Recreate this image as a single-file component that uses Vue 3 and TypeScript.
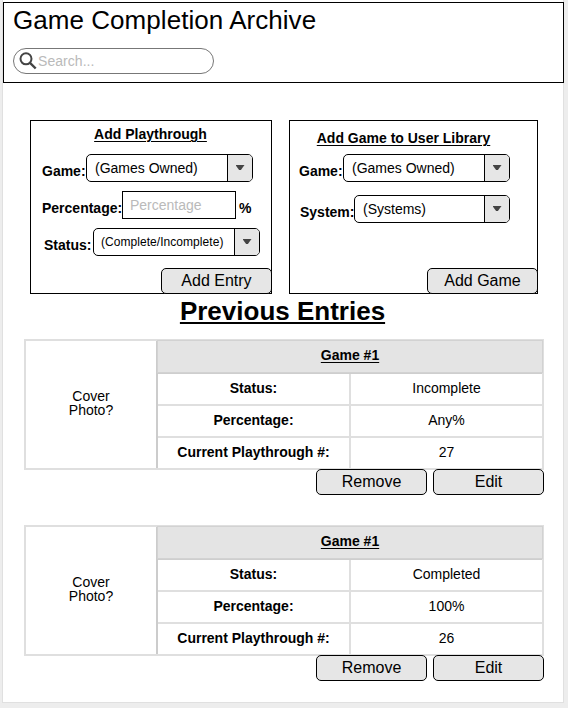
<script setup lang="ts">
interface Entry {
  title: string
  status: string
  percentage: string
  playthrough: number
}

const entries: Entry[] = [
  { title: 'Game #1', status: 'Incomplete', percentage: 'Any%', playthrough: 27 },
  { title: 'Game #1', status: 'Completed', percentage: '100%', playthrough: 26 },
]
</script>

<template>
  <main class="sheet">
    <header class="banner">
      <h1>Game Completion Archive</h1>
      <div class="search">
        <svg class="lens" viewBox="0 0 18 18" width="18" height="18">
          <circle cx="7" cy="6.8" r="5.5" fill="none" stroke="#444" stroke-width="2" />
          <path d="M11 10.8 L16.7 16.5" fill="none" stroke="#444" stroke-width="2.4" />
        </svg>
        <input type="text" placeholder="Search..." />
      </div>
    </header>

    <div class="panels">
      <section class="panel playthrough">
        <h2>Add Playthrough</h2>
        <div class="row game">
          <span class="label">Game:</span>
          <div class="select"><span>(Games Owned)</span><i><b></b></i></div>
        </div>
        <div class="row percent">
          <span class="label">Percentage:</span>
          <input class="field" type="text" placeholder="Percentage" />
          <span class="label unit">%</span>
        </div>
        <div class="row status">
          <span class="label">Status:</span>
          <div class="select small"><span>(Complete/Incomplete)</span><i><b></b></i></div>
        </div>
        <button>Add Entry</button>
      </section>

      <section class="panel library">
        <h2>Add Game to User Library</h2>
        <div class="row game">
          <span class="label">Game:</span>
          <div class="select"><span>(Games Owned)</span><i><b></b></i></div>
        </div>
        <div class="row system">
          <span class="label">System:</span>
          <div class="select"><span>(Systems)</span><i><b></b></i></div>
        </div>
        <button>Add Game</button>
      </section>
    </div>

    <h2 class="heading">Previous Entries</h2>

    <article v-for="(entry, index) in entries" :key="index" class="entry">
      <div class="grid">
        <div class="cover"><span>Cover</span><span>Photo?</span></div>
        <div class="title"><span>{{ entry.title }}</span></div>
        <div class="key">Status:</div>
        <div class="value">{{ entry.status }}</div>
        <div class="key">Percentage:</div>
        <div class="value">{{ entry.percentage }}</div>
        <div class="key">Current Playthrough #:</div>
        <div class="value">{{ entry.playthrough }}</div>
      </div>
      <div class="actions">
        <button>Remove</button>
        <button>Edit</button>
      </div>
    </article>
  </main>
</template>

<style>
body {
  background: #ededed;
}
</style>

<style scoped>
.sheet,
.sheet * {
  box-sizing: border-box;
}
.sheet {
  width: 562px;
  height: 703px;
  margin-left: 2px;
  padding-top: 2px;
  background: #fff;
  border: solid #e0e0e0;
  border-width: 0 1px 1px;
  font-family: 'Liberation Sans', Arial, sans-serif;
  font-size: 14px;
  line-height: 16px;
  color: #000;
  display: flow-root;
}
h1,
h2 {
  margin: 0;
}
.banner {
  width: 561px;
  height: 81px;
  border: 1px solid #000;
  padding: 2px 0 0 9px;
}
h1 {
  font-size: 26px;
  font-weight: 400;
  line-height: 30px;
  letter-spacing: 0.05px;
}
.search {
  display: flex;
  align-items: center;
  width: 201px;
  height: 26px;
  margin-top: 13px;
  padding-left: 5px;
  border: 1px solid #777;
  border-radius: 13px;
}
.lens {
  flex: none;
}
input {
  font: inherit;
  min-width: 0;
  border: 0;
  padding: 0;
  outline: 0;
  background: none;
}
.search input {
  flex: 1;
  margin-left: 1px;
  letter-spacing: 0.05px;
}
input::placeholder {
  color: #bababa;
  opacity: 1;
}
.panels {
  display: flex;
  gap: 17px;
  margin: 37px 0 0 27px;
}
.panel {
  display: flex;
  flex-direction: column;
  height: 174px;
  border: 1px solid #000;
}
.panel h2 {
  font-size: 14px;
  line-height: 16px;
  text-align: center;
  text-decoration: underline;
  text-decoration-thickness: 1px;
  text-underline-offset: 2px;
}
.playthrough {
  width: 242px;
}
.library {
  width: 249px;
}
.playthrough h2 {
  margin: 5px 1px 0 0;
}
.library h2 {
  margin: 9px 20px 0 0;
}
.row {
  display: flex;
  height: 28px;
}
.label {
  font-weight: 700;
  padding-top: 9px;
  flex: none;
}
.playthrough .game {
  margin: 12px 0 0 11px;
}
.playthrough .game .label,
.library .game .label {
  width: 44px;
}
.percent {
  margin: 9px 0 0 11px;
}
.percent .label:first-child {
  width: 80px;
}
.percent .unit {
  margin-left: 3px;
}
.status {
  margin: 9px 0 0 13px;
}
.status .label {
  width: 49px;
}
.library .game {
  margin: 8px 0 0 9px;
}
.library .system {
  margin: 13px 0 0 10px;
}
.system .label {
  width: 54px;
}
.select {
  display: flex;
  width: 167px;
  border: 1px solid #000;
  border-radius: 5px;
  overflow: hidden;
}
.select span {
  flex: 1;
  padding: 5px 0 0 8px;
}
.select.small span {
  font-size: 12px;
  padding-left: 7px;
  letter-spacing: 0.05px;
}
.system .select {
  width: 156px;
}
.select i {
  display: flex;
  align-items: center;
  justify-content: center;
  width: 25px;
  border-left: 1px solid #000;
  background: #e6e6e6;
}
.select b {
  width: 9px;
  height: 5px;
  margin-bottom: 1px;
  background: #444;
  clip-path: polygon(0 0, 100% 0, 60% 100%, 40% 100%);
}
.field {
  width: 114px;
  border: 1px solid #000;
  padding-left: 7px;
}
button {
  width: 111px;
  height: 26px;
  padding: 0;
  font: 16px/24px 'Liberation Sans', Arial, sans-serif;
  color: #000;
  background: #e6e6e6;
  border: 1px solid #000;
  border-radius: 5px;
}
.panel button {
  margin: auto -1px -1px auto;
}
.heading {
  margin: 2px 0 0 -1px;
  font-size: 26px;
  line-height: 30px;
  text-align: center;
  text-decoration: underline;
  text-decoration-thickness: 2px;
  text-underline-offset: 2px;
}
.entry {
  width: 520px;
  height: 156px;
  margin: 13px 0 0 21px;
}
.entry + .entry {
  margin-top: 30px;
}
.grid {
  display: grid;
  grid-template-columns: 130px 191px 191px;
  grid-template-rows: 31px 30px 30px 30px;
  gap: 2px;
  padding: 2px;
  background: #dfdfdf;
}
.grid > div {
  display: flex;
  align-items: center;
  justify-content: center;
  padding-bottom: 2px;
  background: #fff;
}
.grid .cover {
  grid-row: 1 / 5;
  flex-direction: column;
  padding-bottom: 4px;
  line-height: 14px;
  box-shadow: 2px 0 #ccc;
}
.grid .title {
  grid-column: 2 / 4;
  padding-bottom: 3px;
  background: #e4e4e4;
  font-weight: 700;
  box-shadow: 0 0 0 1px #d2d2d2, 0 2px #cecece;
}
.title span {
  text-decoration: underline;
  text-decoration-thickness: 1px;
  text-underline-offset: 2px;
}
.key {
  font-weight: 700;
}
.actions {
  display: flex;
  justify-content: flex-end;
  gap: 6px;
  margin-top: -1px;
  position: relative;
}
</style>
